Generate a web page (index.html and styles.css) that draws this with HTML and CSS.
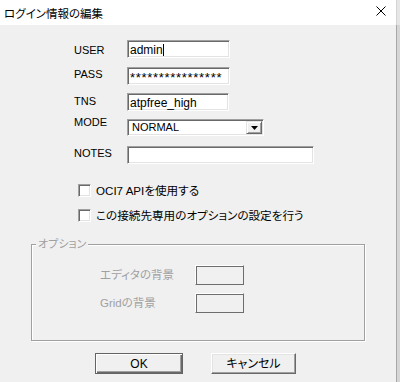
FILE: index.html
```html
<!DOCTYPE html>
<html lang="ja">
<head>
<meta charset="utf-8">
<title>ログイン情報の編集</title>
<link rel="stylesheet" href="styles.css">
</head>
<body>
<div class="window">
  <div class="dialog">
    <div class="titlebar">
      <span class="title">ログイン情報の編集</span>
      <svg class="close" width="10" height="10" viewBox="0 0 10 10"><path d="M0.5 0.5L9.5 9.5M9.5 0.5L0.5 9.5" stroke="#000" stroke-width="1" fill="none"/></svg>
    </div>
    <div class="content">
      <div class="form">
        <span class="lbl lbl-user">USER</span>
        <div class="field w-user">admin<span class="caret"></span></div>
        <span class="lbl">PASS</span>
        <div class="field w-user pass">****************</div>
        <span class="lbl lbl-tns">TNS</span>
        <div class="field w-tns">atpfree_high</div>
        <span class="lbl lbl-mode">MODE</span>
        <div class="select">
          <span class="select-text">NORMAL</span>
          <span class="drop"><svg width="7" height="4" viewBox="0 0 7 4"><path d="M0 0H7L3.5 4Z" fill="#000"/></svg></span>
        </div>
        <span class="lbl">NOTES</span>
        <div class="field w-notes"></div>
      </div>
      <div class="checks">
        <div class="check"><span class="box"></span><span class="check-text">OCI7 APIを使用する</span></div>
        <div class="check"><span class="box"></span><span class="check-text">この接続先専用のオプションの設定を行う</span></div>
      </div>
      <div class="group">
        <span class="legend">オプション</span>
        <div class="opt"><span class="opt-label">エディタの背景</span><span class="swatch"></span></div>
        <div class="opt"><span class="opt-label">Gridの背景</span><span class="swatch"></span></div>
      </div>
      <div class="buttons">
        <div class="btn btn-default">OK</div>
        <div class="btn btn-cancel">キャンセル</div>
      </div>
    </div>
  </div>
  <div class="edge"><div class="edge-top"></div><div class="edge-body"></div></div>
</div>
</body>
</html>
```
FILE: styles.css
```css
* { box-sizing: border-box; margin: 0; padding: 0; }
html, body { width: 400px; height: 382px; overflow: hidden; }
body {
  font-family: "Liberation Sans", "Noto Sans CJK JP", sans-serif;
  font-size: 12px;
  color: #000;
  background: #f0f0f0;
  font-feature-settings: "palt";
}
.window { display: flex; height: 382px; }
.dialog { width: 396px; display: flex; flex-direction: column; background: #f0f0f0; }
.titlebar {
  height: 25px; background: #fff;
  display: flex; justify-content: space-between; align-items: center;
  padding: 0 10px 0 4px;
}
.title { font-family: "Noto Sans CJK JP", sans-serif; font-size: 11.5px; line-height: 14px; }
.close { display: block; margin-top: -4px; }
.edge { width: 4px; display: flex; flex-direction: column; }
.edge-top { height: 25px; background: #e6e6e6; border-left: 1px solid #d4d4d4; }
.edge-body { flex: 1; background: #d6d6d6; border-left: 1px solid #a8a8a8; }

.content { flex: 1; padding-top: 15px; }

.form {
  display: grid;
  grid-template-columns: 53px auto;
  grid-template-rows: 27px 26px 26px 27px 18px;
  margin-left: 74px;
  justify-items: start;
  align-items: start;
}
.lbl { font-size: 11px; line-height: 13px; margin-top: 1px; }
.lbl-user { margin-top: 4px; }
.lbl-tns { margin-top: 2px; }
.lbl-mode { margin-top: -3px; }

.field {
  height: 18px; background: #fff;
  border: 1px solid; border-color: #a0a0a0 #fff #fff #a0a0a0;
  box-shadow: inset 1px 1px 0 #696969, inset -1px -1px 0 #e3e3e3;
  padding: 3px 0 0 2px;
  font-size: 12px; line-height: 13px;
  white-space: nowrap; overflow: hidden;
}
.w-user { width: 103px; }
.w-tns { width: 102px; }
.w-notes { width: 187px; }
.pass { font-size: 13px; line-height: 12px; letter-spacing: 0.7px; padding-top: 4px; }
.caret { display: inline-block; width: 1px; height: 12px; background: #000; vertical-align: -2px; }

.select {
  width: 137px; height: 17px; background: #fff;
  border: 1px solid; border-color: #a0a0a0 #fff #fff #a0a0a0;
  box-shadow: inset 1px 1px 0 #696969, inset -1px -1px 0 #e3e3e3;
  padding: 1px 1px 1px 4px;
  display: flex; justify-content: space-between; align-items: center;
}
.select-text { font-size: 11px; line-height: 13px; }
.drop {
  width: 16px; height: 13px; background: #f0f0f0;
  border: 1px solid; border-color: #e3e3e3 #696969 #696969 #e3e3e3;
  box-shadow: inset 1px 1px 0 #fff, inset -1px -1px 0 #a0a0a0;
  display: flex; align-items: center; justify-content: center;
}
.drop svg { display: block; }

.checks { margin: 20px 0 0 78px; display: flex; flex-direction: column; gap: 12px; }
.check { display: flex; align-items: center; height: 13px; gap: 5px; }
.box {
  width: 13px; height: 13px; background: #fff;
  border: 1px solid; border-color: #a0a0a0 #fff #fff #a0a0a0;
  box-shadow: inset 1px 1px 0 #696969, inset -1px -1px 0 #e3e3e3;
}
.check-text { font-size: 11.6px; line-height: 14px; white-space: nowrap; }

.group {
  position: relative;
  margin: 22px 0 0 31px;
  width: 334px; height: 97px;
  border: 1px solid #a0a0a0;
  box-shadow: inset 1px 1px 0 #fff, 1px 1px 0 #fff;
  padding: 20px 0 0 68px;
  display: flex; flex-direction: column; gap: 8px;
}
.legend {
  position: absolute; left: 4px; top: -8px;
  background: #f0f0f0; padding: 0 2px;
  color: #a0a0a0; font-size: 11px; line-height: 14px;
}
.opt { display: flex; align-items: center; height: 20px; }
.opt-label { width: 95px; color: #a0a0a0; font-size: 11.5px; line-height: 14px; }
.swatch {
  width: 49px; height: 20px;
  border: 1px solid; border-color: #fff #6d6d6d #6d6d6d #fff;
  box-shadow: inset 1px 1px 0 #6d6d6d;
}

.buttons { display: flex; margin: 12px 0 0 95px; gap: 28px; }
.btn {
  height: 21px;
  display: flex; align-items: center; justify-content: center;
  font-size: 12px; line-height: 14px;
}
.btn-default {
  width: 88px;
  border: 1px solid #646464;
  box-shadow: inset 1px 1px 0 #fff, inset -1px -1px 0 #696969, inset -2px -2px 0 #a0a0a0;
}
.btn-cancel {
  width: 85px;
  border: 1px solid; border-color: #fff #696969 #696969 #fff;
  box-shadow: inset -1px -1px 0 #a0a0a0, inset 1px 1px 0 #e3e3e3;
}
```
